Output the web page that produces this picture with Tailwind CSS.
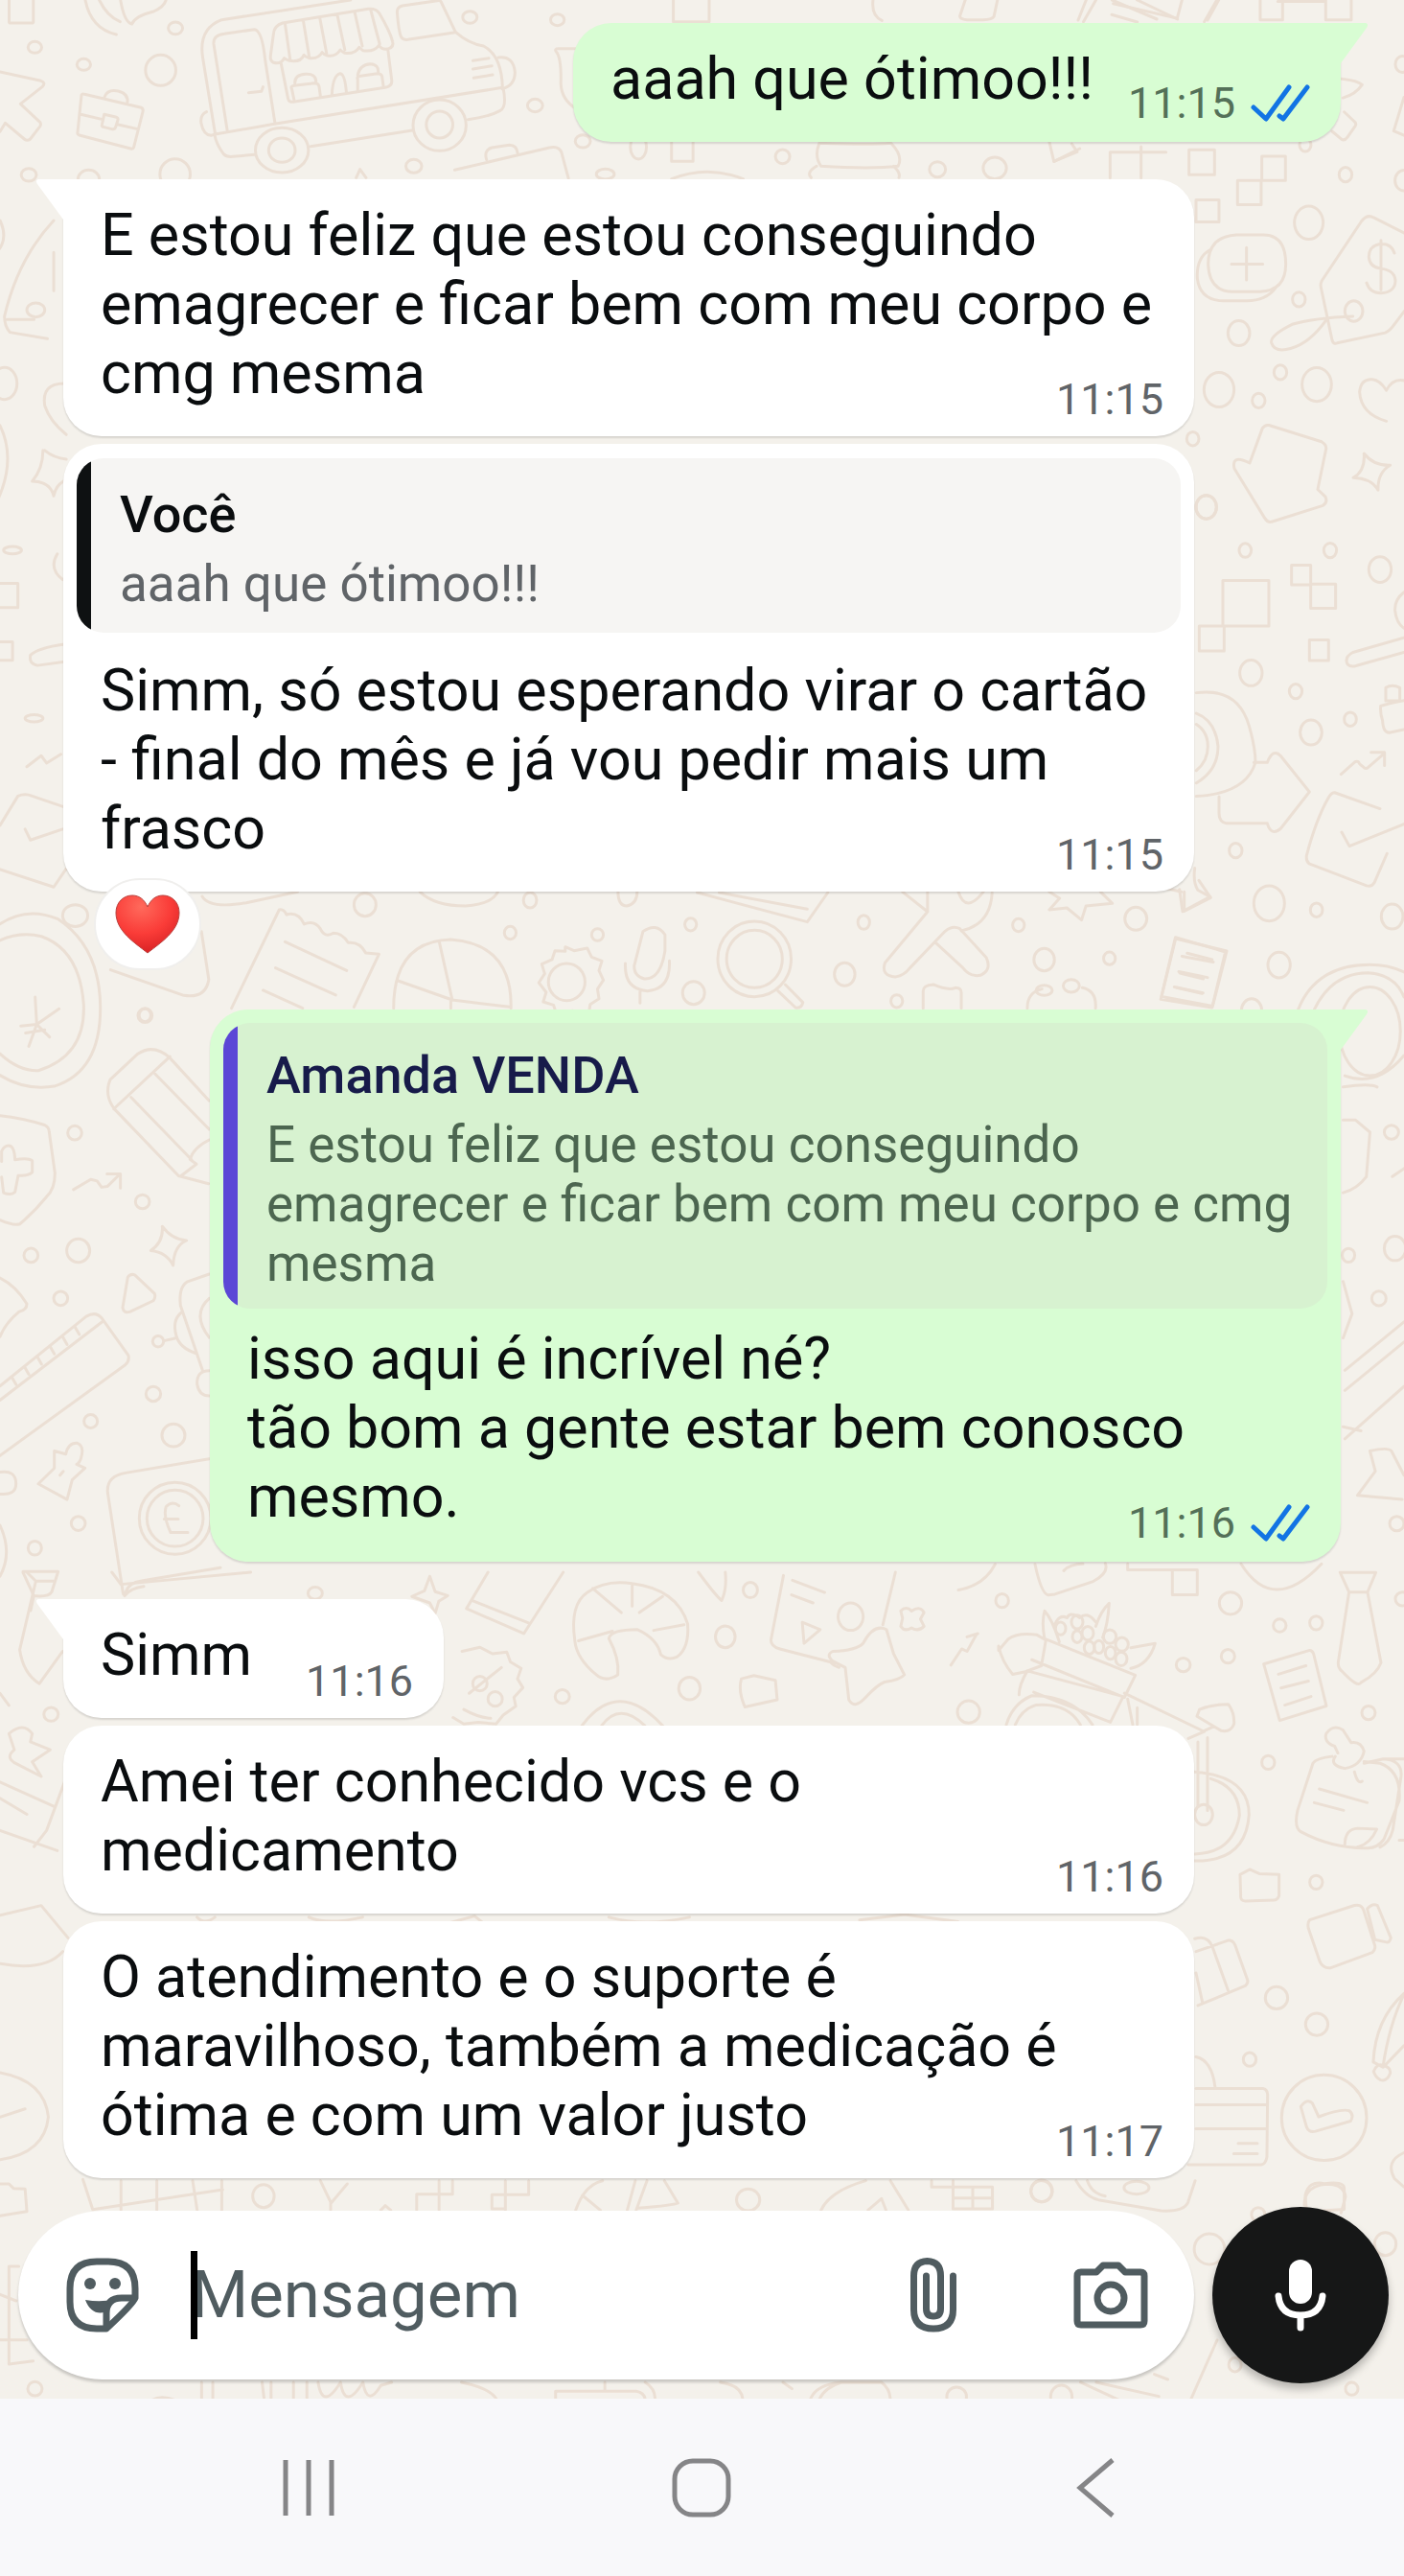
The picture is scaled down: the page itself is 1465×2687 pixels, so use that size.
<!DOCTYPE html>
<html lang="pt-BR">

<head>
  <meta charset="UTF-8">
  <meta name="viewport" content="width=device-width, initial-scale=1.0">
  <title>Conversa</title>
  <script src="https://cdn.jsdelivr.net/npm/@tailwindcss/browser@4"></script>
</head>

<body class="min-h-screen flex flex-col bg-[#f8f8fa] font-[Roboto,sans-serif] text-[#0a0d0f]">

  <!-- Shared shapes -->
  <svg class="hidden" xmlns="http://www.w3.org/2000/svg">
    <symbol id="tail-left" viewBox="0 0 28 42"><path fill="currentColor" d="M28 0H3C0 0-1 2 1 5L28 42z" /></symbol>
    <symbol id="tail-right" viewBox="0 0 28 42"><path fill="currentColor" d="M0 0h25c3 0 4 2 2 5L0 42z" /></symbol>
    <symbol id="ticks" viewBox="0 0 62 40">
      <path fill="none" stroke="currentColor" stroke-width="5" stroke-linecap="round" stroke-linejoin="round" d="M3 24l13 12L40 3M30 33l4 3L59 3" />
    </symbol>
  </svg>

  <div class="relative isolate bg-[#f4f1eb]">

    <!-- Wallpaper -->
    <svg class="absolute inset-0 -z-10 w-full h-full [&_*]:[vector-effect:non-scaling-stroke]" viewBox="0 0 1465 2504" preserveAspectRatio="xMidYMin slice" fill="none" stroke="#ebdfd4" stroke-width="3" stroke-linecap="round" stroke-linejoin="round" aria-hidden="true">
      <!-- food truck and briefcases -->
      <g transform="scale(.3954 .3333)">
        <path d="M24 0v68q0 4 4 4h56q4 0 4-4V0M225 0q15 90 82 108M262 0q20 50 55 68M318 0q10 70 30 75 10-25 55-38 30-15 35-37" />
        <path d="M0 225l108 28q14 6 4 18L54 325l52 58q4 10-4 18l-22 34q-8 8-16 0L14 385 0 412" />
        <path d="M215 297q2-4 8-2l150 42q6 4 4 12l-24 112q-2 6-8 4l-136-42q-6-4-4-10zM213 358l58 16M312 390l52 14M276 303q8-25 36-18 28 8 24 38M275 358l30 8q8 2 6 10l-6 22q-2 8-10 6l-20-6q-8-2-6-8z" />
        <path d="M545 350q-18 10-14 36 6 36 26 38l14-6M1315 180q40-6 44 46 0 42-34 52" />
        <path d="M568 420L535 180q-12-90 50-118L925 0M566 420q4 30 24 62 8 10 24 8l58-6M726 388L700 190q-8-94-28-98l-80 14q-30 4-28 32l36 272M568 420l156-32 602-114q-2-100-50-130-40-8-74-44L1164 6q-2-6-10-4l-92 16q-14 4-14 20 4 60 10 76 4 12 18 10l122-22M1328 276q10 60-8 70-30 20-85 28M820 458l268-50M656 290l34-4 4-14" />
        <path d="M722 104q2-24 24-32l226-44q20-2 28 12 30 60 36 90 4 16-10 22-16 6-26-10-14 22-42 16-10-8-10-10-12 22-38 18-10-6-12-10-12 22-34 18-8-2-14-10-10 22-34 18-10-4-14-10-8 24-38 18-10-4-14-8-8 20-28 14-10-6-8-22zM752 72l14 118M800 62l16 116M844 56l18 112M890 46l20 110M936 38l20 106M978 30l24 108M742 200l18 108q2 14 18 10l238-44q18-4 18-20l-10-96" />
        <path d="M776 312l-6-34q-4-8 6-10l54-8q10 0 12 10l4 34M778 260q0-26 28-28t28 24M876 296q2-60 22-66 12 2 16 58M944 284v-36q-4-8 8-10l44-8q10 0 12 8l4 34M944 236q4-34 34-36 22 2 20 28M1248 190l42-8M1248 216l50-10M1250 244l50-10" />
        <path d="M1200 532l250-70q26-6 32 16l18 80M1284 500q-8-30 14-38l46-8q20 0 22 26M1520 152h-46q-12 0-6 10 14 20 12 100 2 50 40 78M940 556l10-26 16 26" />
        <circle cx="744" cy="470" r="70" /><ellipse cx="744" cy="470" rx="35" ry="38" /><ellipse cx="1160" cy="392" rx="70" ry="80" /><ellipse cx="1160" cy="390" rx="35" ry="42" />
        <circle cx="92" cy="148" r="18" /><circle cx="221" cy="202" r="18" /><circle cx="463" cy="88" r="19" /><ellipse cx="424" cy="220" rx="40" ry="48" /><ellipse cx="462" cy="545" rx="40" ry="48" /><circle cx="76" cy="547" r="20" /><circle cx="234" cy="560" r="28" /><circle cx="1240" cy="54" r="19" /><circle cx="1471" cy="62" r="18" /><circle cx="1412" cy="330" r="20" /><circle cx="1092" cy="520" r="21" /><circle cx="1538" cy="442" r="20" />
      </g>
      <!-- strip above the first replies -->
      <g transform="scale(.9343 .3333)">
        <path d="M752 0v68h40V0M975 0q-2 50 10 64M1078 0l-6 50q0 10 8 12h18q10 0 12-10l4-52M1210 68l14-68M1345 68l14-68M1242 0l50 60M1270 0l45 60M750 445v60h24v-60M915 448q60 6 80 0 14 40 8 72-30 10-86 0-8-30-2-72zM912 520q-12 20-6 36M998 520q8 20 6 36M1172 445l5 60 26-30-6-25" />
        <path d="M750 560q40-45 80 0" /><ellipse cx="676" cy="545" rx="10" ry="16" /><ellipse cx="713" cy="460" rx="9" ry="38" /><ellipse cx="874" cy="490" rx="8" ry="22" /><ellipse cx="1047" cy="530" rx="9" ry="24" /><ellipse cx="1111" cy="526" rx="13" ry="34" />
        <path d="M0 690q10 60-4 100M60 690q-40 120-55 300 0 30 6 50l42 20M60 790v120M8 1000h30" /><ellipse cx="40" cy="970" rx="10" ry="22" /><ellipse cx="5" cy="1200" rx="14" ry="50" /><path d="M72 1200q-26 0-22 70 6 50 24 90" />
      </g>
      <!-- squares, price tag and stickers on the right edge -->
      <g transform="translate(1100 0) scale(.3333 .3827)">
        <path d="M75 55L100 0M180 40l80 20M185 10l200 40 15-50M480 55l35-55M645 0v54h70V0M850 0v54h80V0M700 4h150M175 485v-70h175M272 400v85M0 440l80-35M422 408h80v68h-80zM650 426h74v66h-74zM574 492h74v66h-74zM444 545h72v60h-72z" />
        <path d="M570 640h85q70 0 70 80 0 72-80 75h-85q-75 0-78-75 0-75 88-80zM602 675v88M555 720h98M490 680q-45 20-42 78 8 60 80 62h75q60 0 90-35" />
        <path d="M1095 635l-95-42q-20-10-38 10L838 765q-6 10-2 22l34 140q4 12 16 8l150-28q14-4 30-24l30-35M1065 690q-10-28-45-25-35 5-35 35 2 28 38 32 45 5 45 35-2 30-45 32-35 0-45-28M1023 655v135M935 862q-120 4-190 22-70 30-65 50 10 28 60 16 60-14 112-78" />
        <circle cx="938" cy="848" r="28" />
        <path d="M1040 1148q-80-20-84-80 4-36 40-34 24 2 44 30 20-35 60-26M612 1262l40-95q8-10 20-8l165 45q16 8 14 20l-26 110 24 20q8 16-8 24l-160 44q-12 4-22-10l-95-135q-10-40 48-15zM970 1236q30 34 82 32-40 20-38 68-20-32-78-34 38-18 34-66z" />
        <path d="M900 215q50 5 64 16-20 26-60 36M870 358l30 22q10 4 18-6l24-30q6-8-4-14l-30-25M1095 265l-32 92 32 12" />
        <circle cx="797" cy="607" r="45" /><circle cx="912" cy="476" r="20" /><circle cx="766" cy="816" r="20" /><circle cx="578" cy="908" r="34" /><circle cx="708" cy="1015" r="20" /><circle cx="516" cy="1062" r="47" /><circle cx="822" cy="1048" r="46" /><circle cx="640" cy="1092" r="20" /><circle cx="434" cy="1196" r="19" /><circle cx="476" cy="1382" r="32" /><circle cx="598" cy="1500" r="19" /><circle cx="864" cy="1500" r="20" /><circle cx="1090" cy="175" r="22" /><circle cx="1095" cy="492" r="28" /><circle cx="786" cy="395" r="18" />
      </g>
      <g transform="translate(1200 480) scale(.3333 .3827)">
        <path d="M228 328h144v124H228zM154 452h78v68h-78zM443 286h60v54h-60zM503 338h78v66h-78zM499 490h60v56h-60z" />
        <path d="M795 484l-160 40q-26 12-18 30 8 12 30 6l148-36M738 620q20-10 44 0v36h-44zM722 670q20-6 73-15M722 670q-2 20 6 40 2 36 24 32l43-8M598 856l44-34q10-4 14 6l14 10q6 4 12 0l48-36M692 796h42v36" />
        <path d="M145 634q130-15 165 90 20 60 20 100-30 85-185 92M145 690q60 20 68 90 0 65-68 100M145 720q36 20 36 60 0 40-36 66M325 824h42q18-40 42-18l90 98-90 100q-30 22-42-14H240q-24-4-24-28v-45" />
        <path d="M720 950l-142-44q-10 0-18 12-40 60-70 160-2 14 8 22l180 60q16 4 24-8l40-80M600 1014l24 38 171-60M140 1112q-6 40 10 60l38 18-86 40-10-60M80 1304l160 34-44 150-160-26zM100 1352l98 16M90 1394l90 16M76 1436l90 16" />
        <circle cx="176" cy="128" r="32" /><circle cx="720" cy="298" r="35" /><path d="M795 360q-30 20-28 50 4 34 28 48" /><circle cx="316" cy="580" r="35" /><circle cx="456" cy="630" r="20" /><circle cx="504" cy="742" r="34" /><circle cx="627" cy="706" r="19" /><circle cx="268" cy="1064" r="20" /><circle cx="373" cy="1208" r="48" /><circle cx="521" cy="1226" r="19" /><circle cx="758" cy="1244" r="34" /><circle cx="404" cy="1376" r="35" /><circle cx="318" cy="1500" r="32" />
      </g>
      <!-- left edge beside the quoted reply -->
      <g transform="translate(0 440) scale(.9343 .3827)">
        <path d="M0 10q18 90-2 200M50 78q10 20 24 24M48 78q0 50-12 84 20 0 24 40 2-30 14-44M0 440h20v66H0M0 600h14v50H0M72 606q-30 10-38 30-2 24 8 28l30-10M64 360q-10 40 6 70M30 940l16-30 6 20 16-24M0 1100l20-80q8-8 16 0l36 30M0 1220l60 48 14-50M28 1110l6 30 36-30" />
        <circle cx="14" cy="350" r="10" /><circle cx="38" cy="808" r="10" /><ellipse cx="84" cy="1346" rx="14" ry="30" />
      </g>
      <!-- office doodles under the reaction -->
      <g transform="translate(100 915) scale(.7653 .3333)">
        <path d="M145 60q10 40 60 20l70-34M185 410l65-308q6-4 10 15 16-10 24 30 14-14 22 14 6 30 18 14 12 0 20 30 16-4 24 32l18 4-34 165M258 202l84 90M245 284l82 85M228 354l54 56M442 46q20 44 62 44 36-6 44-44M406 410q0-210 78-215 84 14 82 215M468 200l18 184M412 324l74 60 78 22M484 384v26" />
        <path d="M640 218l12 12 18-8 6 28 14 12-4 30 6 30-8 28 2 30-12 18-2 30-22-10-22 10-4-28-14-10 4-30-10-30 8-28-4-30 14-14 4-28 14 2zM746 170q18-30 30 10v50q-6 90-28 88-14-8-14-40zM722 270q-2 80 30 86 32-6 30-94M742 354v40M712 46q0 44 12 44 14-6 14-44M820 48l150 92 28-92M850 48l120 52" />
        <path d="M930 356l24 52q8 4 10-16l-24-56M1100 46l34 62-58 160q-6 40 14 44 12-4 20-28l48-115q10-20 20-8l36 90q8 40-8 56-14 6-24-24l-38-80M1134 108V46M1180 168q40-20 42-120M1176 46q10 70 34 0M1300 46l14 20-14 36 24-6 20 38 6-44 36-8-16-36M1480 46l-18-10M1504 10l16 54-36 42v-60M1472 188l68 46-18 174-70-26zM1488 238l34 20M1478 300l32 18M1474 346l34 18M1128 410v-54q0-18 14-20 20 20 30 10 8 0 8 15v49M1270 410q0-50 20-60M1345 346q20 10 18 64" />
        <ellipse cx="898" cy="256" rx="50" ry="118" /><ellipse cx="898" cy="256" rx="38" ry="90" /><ellipse cx="642" cy="328" rx="25" ry="58" /><ellipse cx="367" cy="86" rx="15" ry="36" /><ellipse cx="565" cy="174" rx="8" ry="20" /><ellipse cx="592" cy="72" rx="9" ry="24" /><ellipse cx="684" cy="180" rx="8" ry="19" /><ellipse cx="811" cy="148" rx="8" ry="20" /><ellipse cx="815" cy="362" rx="15" ry="36" /><ellipse cx="1021" cy="304" rx="14" ry="36" /><ellipse cx="1047" cy="141" rx="8" ry="22" /><ellipse cx="1258" cy="150" rx="8" ry="20" /><ellipse cx="1418" cy="130" rx="15" ry="36" /><ellipse cx="1293" cy="258" rx="14" ry="35" /><ellipse cx="1382" cy="254" rx="8" ry="20" /><ellipse cx="1092" cy="388" rx="8" ry="20" /><ellipse cx="1330" cy="340" rx="11" ry="20" /><ellipse cx="1293" cy="354" rx="11" ry="16" /><ellipse cx="67" cy="432" rx="8" ry="20" />
        <path d="M20 290l100 80q30 10 34-50l-10-150" />
      </g>
      <!-- coin, pencil, shield, ruler and banknote -->
      <g transform="translate(0 1040) scale(.3333 .4082)">
        <path d="M-115 -70Q0-180 130-155 250-120 262 20 268 150 120 188 60 190 0 145M-40-160Q60-240 180-200 310-130 314 20 318 190 170 228 80 240 0 200M110 0l5 70 70-40M115 70l40 32M115 70L90 126M115 70l-50 4M80 92l60-8" />
        <path d="M655 265L530 154q-50-36-100-8l-85 65q-20 40 14 76l200 170 94 20M356 286l176-134M410 256l190 160M485 196l170 142M655 365q-50 20-60 50l20 12-48 30" />
        <path d="M0 303q70 6 140 24 14 6 14 18l18 105q0 40-26 60-40 40-84 70-20 5-62-10M5 420V394q8-14 22-14 18 0 20 36 40-6 54 2v30q-14 10-44 8l-10 42q-14 10-36 2l-6-40M230 492l54-26 20 4 14 16 18-2 40-32M335 452h42v36M508 586q30 34 76 36-40 14-42 64-20-34-70-38 40-22 36-62zM400 716q8-10 22-6l62 48q4 10-4 18l-72 28q-20 6-24-10z" />
        <path d="M0 718q50 20 84 66 0 16-24 20-44 30-60 64M0 994l270-178q30-14 48 4l84 96q4 14-10 24L0 1172M0 1030l320-200M36 970l14 20M76 944l14 20M116 918l14 20M156 892l14 20M196 868l14 20M234 842l14 20" />
        <path d="M655 708l-70 20q-26 14-20 60l70 168M568 806q-30 20-16 60 10 30 60 44M548 872l-32 6M655 770q-56 40 0 100M655 955q-40 0-38 34 6 30 38 30" />
        <path d="M170 1160l36 8q8-30 36-28 20 6 14 30-4 20-16 24l26 10-40 30-16 50-90-40 50-40zM188 1222l10-10M655 1180l-262 36q-60 8-56 50l48 256q2 10 8 0 10-26 50-30l247-34M390 1530q20-20 60-24M560 1300q-20-14-40 2-10 24 14 66M514 1334h44M534 1368h54M72 1468h110l-20 52q-10 14-56 10l-34-60M106 1530l-10 38" />
        <path d="M0 1214q50-6 50 30 0 30-50 26M0 1350q40 70 0 130" />
        <ellipse cx="548" cy="1332" rx="112" ry="92" /><ellipse cx="548" cy="1332" rx="88" ry="72" /><ellipse cx="495" cy="880" rx="17" ry="14" />
        <ellipse cx="454" cy="47" rx="22" ry="18" /><ellipse cx="234" cy="347" rx="22" ry="18" /><ellipse cx="446" cy="523" rx="22" ry="18" /><ellipse cx="97" cy="660" rx="22" ry="18" /><ellipse cx="245" cy="648" rx="36" ry="30" /><ellipse cx="190" cy="770" rx="22" ry="18" /><ellipse cx="480" cy="1014" rx="23" ry="19" /><ellipse cx="284" cy="1084" rx="21" ry="17" /><ellipse cx="543" cy="1120" rx="36" ry="29" /><ellipse cx="245" cy="1345" rx="22" ry="18" /><ellipse cx="109" cy="1408" rx="21" ry="18" />
      </g>
      <!-- right edge beside the second quote -->
      <g transform="translate(0 1000) scale(.9343 .4209)">
        <path d="M1450 125q20-110 80-110 20 0 38 18M1468 125q20-90 60-90 30 4 40 60M1568 240q-30 80-66 50M1500 318q30-10 38 0M1500 400h14l16 30-4 110q-10 30-26 40M1555 540l13-20M1500 800l10 80-10 60M1568 900l-66 120M1568 950l-66 120M1568 1060l-66 130M1530 1220q20-10 24 0l14 60M1530 1220l6 50-20 60 50 10M1500 1160l20 10" />
        <ellipse cx="1530" cy="180" rx="34" ry="110" /><ellipse cx="1554" cy="430" rx="8" ry="17" /><ellipse cx="1506" cy="735" rx="7" ry="17" /><ellipse cx="1558" cy="718" rx="12" ry="30" /><ellipse cx="1540" cy="842" rx="8" ry="18" /><ellipse cx="1560" cy="1400" rx="8" ry="18" />
      </g>
      <!-- croissant, playing cards and badge -->
      <g transform="translate(0 1640) scale(.9343 .4209)">
        <path d="M545 0l-24 90 64 62 44-152M527 70l64 56M280 0l-145 30-10-30M480 10l-6 36-14 14 20 16 6 26 4-30 10-14-14-10z" />
        <path d="M642 170q-6-90 14-120 20-32 50-22 50 14 62 100 2 60-12 82-10 10-18-6-4-40-26-62-30 0-32 22 12 50 10 90-14 20-24 0-22-40-24-84zM662 40l32 60M706 28v56M740 60l-26 40M764 130l-34 14M646 170l38-24" />
        <path d="M516 196l20-10 14 16 16-4 4 24 12 16-4 26 6 22-10 24 2 22-14 22-8 22-20-4-16 4-12-16M518 340q16 20 30 22M524 300l36-64M650 380q40-120 90 0M672 380q20-60 48 0" />
        <path d="M875 8q-8 90-14 160 0 16 10 22l56 32q4 10 10 14M1000 0l-14 130M885 20l36 30M884 56l24 20M896 124l20 18-18 34zM930 196q26-2 34-20 12-50 26-34l8 60 12 52q-4 12-22 18-8 6-22 40-12 28-18 4l-4-80-14-16q-8-16 0-24zM1006 96q6-14 12 0 10-14 14 4l-4 16 4 18q-6 14-14 4-8 10-12-4l2-20zM1062 230l12-40 6 6 10-40M1080 160l12-8M780 0q20 60 26 70 6-30 4-70M828 264l14-8 24 12 2 48-36 18q-8-40-4-70z" />
        <ellipse cx="838" cy="44" rx="8" ry="19" /><ellipse cx="810" cy="160" rx="11" ry="27" /><ellipse cx="770" cy="288" rx="12" ry="28" /><ellipse cx="628" cy="308" rx="8" ry="17" /><ellipse cx="950" cy="110" rx="14" ry="34" /><ellipse cx="536" cy="276" rx="8" ry="18" /><ellipse cx="553" cy="314" rx="8" ry="18" /><ellipse cx="352" cy="52" rx="8" ry="15" /><ellipse cx="57" cy="352" rx="8" ry="17" />
        <path d="M30 0l10 22-18 170q4 60 22 84l26-80M60 22l-20 0M0 300l10 30M10 400q16-30 26 0l-2 20 22 20-20 30 10 36-30-34q-10-14 0-32zM0 520l60 60M0 560l30 40M72 520l-20 120-14 40M0 640l64 50M0 850l46-24 30 80M0 970q50 20 70-30M0 1240q50 20 54 110-4 90-54 106M0 1350l28-20M220 855q8 20 20 0M345 855q20 20 60 0M500 870l30-18 10 18M680 855q40 24 90 0M960 862l50-14 60 18" />
      </g>
      <!-- fruit bike, notes and camera on the lower right -->
      <g transform="translate(1000 1625) scale(.3333 .4464)">
        <path d="M0 75q80-10 115-60M240 15q20 70 42 72l20-2 120-30q50-20 38-42M330 30q20-16 60-16M530 14v14h140M670 28h78v58h-78zM885 14q100 120 252 0M1195 34h112l-26 46h-58zM1223 80l-34 165q0 14 12 20 50 40 60 26 50-20 62-46L1281 80" />
        <path d="M126 216l30-26q30-16 90-10l28 12-14 60-50 14-40 6q-34-30-44-66zM274 190l280 84-34 52L230 238M190 320q0-24 26-56l300 60-40 60-240-70M150 390q20-50 80-68 130 0 190 68M178 390q20-36 64-46 100-6 140 46M270 190q-10-40 0-66 24 20 46 72M300 160q14-30 40-20 10-16 40 0 24-16 50 10M430 160q16-36 42-54-4 50-20 80M540 210l76-10q-20 50-76 58M520 316l250 90-50 16M530 330l16 60M560 350v40M755 354q40-12 90-12 20 20 18 46-10 20-40 16l-76-34zM750 430v150M780 420v170M740 500q170 10 170 100-10 110-170 108M790 516q90 20 90 86-20 88-140 90M770 404l30-10" />
        <path d="M956 248l144-32q8 0 12 8l40 122-146 34zM1002 272l86-20M1010 304l86-16M1022 344l82-20M1170 464q-50 4-60 16l-48 110q-12 40 10 50 100 40 210 38 30 0 50-20l48-90q8-70-60-88l-50-4M1180 464q-20 20 30 28 50-6 60-40-10-24-40-20l-26-30q-30-14-52 8-10 20 26 30l10 16M1130 540l150 32M1114 572l92 18M1210 670q0-36 40-38l60 2q-20 34-60 42M1270 480l60-10q60 2 56 40l-26 126q-10 30-40 40M1395 470h-60M1380 660h15M1240 500q10 30 24 22" />
        <path d="M882 740l30-12 30 10 62 2v50q-6 10-16 10l-90 2q-16 0-14-14zM1100 846l140-34q24-4 30 14l34 80q2 10-8 16l-130 36q-24 2-34-14l-36-78q-4-14 4-20zM1280 820q16-14 32-8l42 76q-4 12-14 10l-36-6zM744 920l100-26q14-2 22 10l40 84q0 8-8 12l-148 46M740 890q40-10 56 20l48 100M744 970l20 68" />
        <path d="M744 1166q50 8 60 72M744 1240h210q16 2 14 20l-2 140q-4 16-18 18H720M744 1278h220M744 1334h220M876 1368h60M862 1392h74M1072 1282q20-20 36-8l20 32q70-20 96-14 16 10 4 24l-110 24q-20 4-28-10zM1395 1018q-90 60-96 160l30 12q20-100 66-170M1330 1190l65-50M1300 1200q10-20 30-14 24 4 22 18-10 20-30 16-16-6-22-20zM1086 1490q10-36 60-28 60-6 62 10v50l-118 6zM1395 1390q-60 20-30 60l30 20" />
        <ellipse cx="1145" cy="1308" rx="133" ry="100" /><ellipse cx="768" cy="600" rx="28" ry="24" />
        <ellipse cx="320" cy="165" rx="16" ry="15" /><ellipse cx="372" cy="150" rx="18" ry="16" /><ellipse cx="405" cy="176" rx="18" ry="16" /><ellipse cx="372" cy="184" rx="15" ry="14" /><ellipse cx="410" cy="210" rx="16" ry="15" /><ellipse cx="474" cy="184" rx="20" ry="16" /><ellipse cx="440" cy="208" rx="15" ry="15" /><ellipse cx="512" cy="202" rx="20" ry="16" /><ellipse cx="476" cy="222" rx="16" ry="15" /><ellipse cx="510" cy="236" rx="18" ry="16" />
        <ellipse cx="137" cy="100" rx="20" ry="16" /><ellipse cx="852" cy="106" rx="35" ry="26" /><ellipse cx="1006" cy="158" rx="20" ry="15" /><ellipse cx="1120" cy="152" rx="20" ry="16" /><ellipse cx="844" cy="230" rx="21" ry="16" /><ellipse cx="704" cy="250" rx="22" ry="16" /><ellipse cx="1284" cy="362" rx="21" ry="16" /><ellipse cx="970" cy="478" rx="20" ry="16" /><ellipse cx="1120" cy="758" rx="20" ry="16" /><ellipse cx="996" cy="1028" rx="35" ry="26" /><ellipse cx="1122" cy="1090" rx="35" ry="26" /><ellipse cx="912" cy="1172" rx="20" ry="16" /><ellipse cx="32" cy="360" rx="35" ry="26" /><ellipse cx="1390" cy="96" rx="22" ry="16" /><ellipse cx="260" cy="1480" rx="33" ry="25" />
      </g>
      <!-- around the message box -->
      <g transform="translate(0 2270) scale(.4675 .3333)">
        <path d="M0 24h20l10 14 26 2 4 70-60 14M185 10l22 94 290-62M270 14v92M350 14v92M430 14l10 92M495 14v92M715 14l24 70 36-60M738 84v22M850 106l10-14 12 14M930 106V56h80V14M980 14v92M1180 14v44h-82v44h30M1128 14v92M1285 106q20-80 60-92M1300 60l40 46M1400 106l18-92M1420 106l24-92M1425 100q80-10 88-16l-30-70M22 282h20M20 282v306l54-10M0 370l36 20M0 512h60" />
        <ellipse cx="588" cy="62" rx="24" ry="36" /><ellipse cx="78" cy="665" rx="16" ry="22" />
        <path d="M450 645v58M475 645v58M585 645l5 58M605 645v58M655 645v58M685 645v58M710 645q10 90 50 0 10 90 50 0 10 80 40 10l24-10M1030 645q70 20 80 58M1240 703v-30h180q20 5 20 30M1350 645v28M1440 645q24 20 22 58M340 700q20-16 50 0" />
      </g>
      <g transform="translate(733 2270) scale(.4669 .3333)">
        <path d="M265 106q20-60 100-92M420 14l40 92M370 106l30-36 10 36M512 14v20h48M560 14v88h88V34h-88M604 34v68M560 68h88M835 14q20 50 50 60l140 34q50 4 60-26l16-68M860 14q10 40 40 48M1345 90q0-60 50-65 40 0 42 40l-10 50M1090 703l60-190M1010 620l30 16M40 645q50 10 50 58M180 645l20 20M240 703q10-50 70-58h90q20 20 20 58M260 703q10-40 50-58M845 645l90 58M880 645l140 44" />
        <ellipse cx="102" cy="74" rx="26" ry="34" /><ellipse cx="758" cy="46" rx="24" ry="34" /><ellipse cx="970" cy="36" rx="28" ry="20" /><ellipse cx="1133" cy="228" rx="34" ry="48" /><ellipse cx="1526" cy="212" rx="24" ry="36" /><ellipse cx="1242" cy="120" rx="15" ry="22" /><ellipse cx="568" cy="690" rx="22" ry="30" /><ellipse cx="802" cy="690" rx="24" ry="36" /><ellipse cx="1451" cy="665" rx="14" ry="20" /><ellipse cx="1190" cy="590" rx="14" ry="22" />
      </g>
    </svg>

    <!-- Messages -->
    <main class="flex flex-col items-start px-[66px] pt-6 text-[61px] leading-[72px]">

      <div class="relative self-end flex items-end gap-9 rounded-[40px] rounded-tr-none bg-[#d8fdd3] pl-[39px] pr-8 pt-[22px] pb-4 shadow-[0_2px_2px_rgba(0,0,0,0.12)]">
        <svg class="absolute top-0 -right-7 w-7 h-[42px] text-[#d8fdd3]"><use href="#tail-right" /></svg>
        <p class="mb-3.5">aaah que ótimoo!!!</p>
        <div class="flex items-center gap-4 text-[45px] leading-12 text-[#547058]">
          <time>11:15</time>
          <svg class="w-[62px] h-10 text-[#1274e4]" role="img" aria-label="Lida"><use href="#ticks" /></svg>
        </div>
      </div>

      <div class="relative mt-[39px] w-full max-w-[1180px] rounded-[40px] rounded-tl-none bg-white pt-[22px] pb-3.5 shadow-[0_2px_2px_rgba(0,0,0,0.12)]">
        <svg class="absolute top-0 -left-7 w-7 h-[42px] text-white"><use href="#tail-left" /></svg>
        <p class="px-[39px]">E estou feliz que estou conseguindo emagrecer e ficar bem com meu corpo e cmg mesma</p>
        <time class="block w-fit -mt-8 ml-auto mr-8 text-[45px] leading-12 text-[#606468]">11:15</time>
      </div>

      <div class="mt-2 w-full max-w-[1180px] rounded-[40px] bg-white pt-[15px] pb-3.5 shadow-[0_2px_2px_rgba(0,0,0,0.12)]">
        <blockquote class="mx-3.5 mb-6 flex overflow-hidden rounded-[28px] bg-[#f6f5f3] text-[53px] leading-[62px]">
          <div class="w-[15px] shrink-0 bg-[#0e1112]"></div>
          <div class="px-7.5 pt-7 pb-5">
            <p class="mb-2.5 text-[54px] font-medium">Você</p>
            <p class="text-[#606468]">aaah que ótimoo!!!</p>
          </div>
        </blockquote>
        <p class="px-[39px]">Simm, só estou esperando virar o cartão - final do mês e já vou pedir mais um frasco</p>
        <time class="block w-fit -mt-8 ml-auto mr-8 text-[45px] leading-12 text-[#606468]">11:15</time>
      </div>
      <button type="button" aria-label="Reação: coração" class="relative -mt-3.5 ml-8 flex h-24 w-28 items-center justify-center rounded-full border-2 border-[#f0efed] bg-white">
        <svg class="w-[68px] h-[62px]" viewBox="0 0 68 62">
          <defs>
            <radialGradient id="heart" cx=".4" cy=".2" r=".85">
              <stop offset="0" stop-color="#ff6a5c" />
              <stop offset=".55" stop-color="#fa3c38" />
              <stop offset="1" stop-color="#d51f22" />
            </radialGradient>
          </defs>
          <path fill="url(#heart)" stroke="#b9403c" stroke-width="1" d="M34 61C20 50 1 38 1 19 1 8 9 1 18 1c8 0 13 5 16 12C37 6 42 1 50 1c9 0 17 7 17 18 0 19-19 31-33 42z" />
        </svg>
      </button>

      <div class="relative self-end mt-[41px] w-full max-w-[1180px] rounded-[40px] rounded-tr-none bg-[#d8fdd3] pt-3.5 pb-4 shadow-[0_2px_2px_rgba(0,0,0,0.12)]">
        <svg class="absolute top-0 -right-7 w-7 h-[42px] text-[#d8fdd3]"><use href="#tail-right" /></svg>
        <blockquote class="mx-3.5 mb-4 flex overflow-hidden rounded-[28px] bg-[#d7f2d0] text-[53px] leading-[62px]">
          <div class="w-[15px] shrink-0 bg-[#5b47d6]"></div>
          <div class="px-7.5 pt-6 pb-4">
            <p class="mb-2.5 text-[54px] font-medium text-[#171b4a]">Amanda VENDA</p>
            <p class="text-[#4c6650]">E estou feliz que estou conseguindo emagrecer e ficar bem com meu corpo e cmg mesma</p>
          </div>
        </blockquote>
        <p class="px-[39px]">isso aqui é incrível né?<br>tão bom a gente estar bem conosco mesmo.</p>
        <div class="w-fit -mt-8 ml-auto mr-8 flex items-center gap-4 text-[45px] leading-12 text-[#547058]">
          <time>11:16</time>
          <svg class="w-[62px] h-10 text-[#1274e4]" role="img" aria-label="Lida"><use href="#ticks" /></svg>
        </div>
      </div>

      <div class="relative mt-[39px] flex items-end gap-14 rounded-[40px] rounded-tl-none bg-white pl-[39px] pr-8 pt-[22px] pb-3.5 shadow-[0_2px_2px_rgba(0,0,0,0.12)]">
        <svg class="absolute top-0 -left-7 w-7 h-[42px] text-white"><use href="#tail-left" /></svg>
        <p class="mb-4">Simm</p>
        <time class="text-[45px] leading-12 text-[#606468]">11:16</time>
      </div>

      <div class="mt-2 w-full max-w-[1180px] rounded-[40px] bg-white pt-[22px] pb-3.5 shadow-[0_2px_2px_rgba(0,0,0,0.12)]">
        <p class="px-[39px]">Amei ter conhecido vcs e o medicamento</p>
        <time class="block w-fit -mt-8 ml-auto mr-8 text-[45px] leading-12 text-[#606468]">11:16</time>
      </div>

      <div class="mt-2 w-full max-w-[1180px] rounded-[40px] bg-white pt-[22px] pb-3.5 shadow-[0_2px_2px_rgba(0,0,0,0.12)]">
        <p class="px-[39px]">O atendimento e o suporte é maravilhoso, também a medicação é ótima e com um valor justo</p>
        <time class="block w-fit -mt-8 ml-auto mr-8 text-[45px] leading-12 text-[#606468]">11:17</time>
      </div>
    </main>

    <!-- Message box -->
    <form class="flex items-center gap-[19px] pl-[19px] pr-4 pt-[30px] pb-4">
      <div class="flex h-44 min-w-0 flex-1 items-center rounded-full bg-white pl-[50px] pr-12 text-[#505c60] shadow-[0_3px_3px_rgba(0,0,0,0.18)]">
        <button type="button" aria-label="Figurinhas">
          <svg class="w-[76px] h-[78px]" viewBox="0 0 76 78" fill="none" stroke="currentColor" stroke-width="7" stroke-linejoin="round">
            <path d="M42 74H32Q4 74 4 46V32Q4 4 32 4h12q28 0 28 28v10Q70 48 42 74z" />
            <path d="M42 74V58q0-16 16-16h14" />
            <path fill="currentColor" stroke="none" d="M20 44q18 3 30-1-9 5-10 14-14 3-20-13z" />
            <circle cx="25" cy="27" r="6" fill="currentColor" stroke="none" /><circle cx="51" cy="27" r="6" fill="currentColor" stroke="none" />
          </svg>
        </button>
        <div class="relative ml-[54px] min-w-0 flex-1">
          <span class="absolute left-0 -top-0.5 h-[92px] w-[7px] bg-black"></span>
          <input type="text" aria-label="Mensagem" placeholder="Mensagem" class="block w-full text-[69px] leading-[88px] outline-none placeholder:text-[#505c60]">
        </div>
        <button type="button" aria-label="Anexar">
          <svg class="w-12 h-[78px]" viewBox="0 0 48 78" fill="none" stroke="currentColor" stroke-width="7" stroke-linecap="round">
            <path d="M44.500 19v35q0 20-20.500 20T3.500 54V19q0-15 14-15.500 14 .5 14 15.500v34q0 8-7.500 8T16.500 53V19" />
          </svg>
        </button>
        <button type="button" aria-label="Câmera" class="ml-[122px]">
          <svg class="w-[78px] h-[70px]" viewBox="0 0 78 70" fill="none" stroke="currentColor" stroke-width="7" stroke-linejoin="round">
            <path d="M8 11h16l7-7h16l7 7h16q4 0 4 4v47q0 4-4 4H8q-4 0-4-4V15q0-4 4-4z" />
            <circle cx="39" cy="38" r="14" />
          </svg>
        </button>
      </div>
      <button type="button" aria-label="Gravar áudio" class="flex size-[184px] items-center justify-center rounded-full bg-[#161717] text-white shadow-[0_6px_8px_rgba(0,0,0,0.25)]">
        <svg class="w-[54px] h-[76px]" viewBox="0 0 54 76" fill="none" stroke="currentColor" stroke-width="8" stroke-linecap="round">
          <rect x="15" y="1" width="24" height="46" rx="12" fill="currentColor" stroke="none" />
          <path stroke-width="7" d="M4 39q2 20 23 20t23-20M27 60v12" />
        </svg>
      </button>
    </form>
  </div>

  <!-- System navigation -->
  <nav class="grid min-h-44 flex-1 grid-cols-3 place-items-center px-[8%] text-[#858587]">
    <button type="button" aria-label="Recentes">
      <svg class="w-15 h-[62px]" viewBox="0 0 60 62" stroke="currentColor" stroke-width="5"><path d="M6 2v58M30 2v58M54 2v58" /></svg>
    </button>
    <button type="button" aria-label="Início">
      <svg class="w-[62px] h-[62px]" viewBox="0 0 62 62" fill="none" stroke="currentColor" stroke-width="5"><rect x="3" y="3" width="56" height="56" rx="19" /></svg>
    </button>
    <button type="button" aria-label="Voltar">
      <svg class="w-10 h-[62px]" viewBox="0 0 40 62" fill="none" stroke="currentColor" stroke-width="5"><path d="M38 2L4 31l34 29" /></svg>
    </button>
  </nav>
</body>

</html>
